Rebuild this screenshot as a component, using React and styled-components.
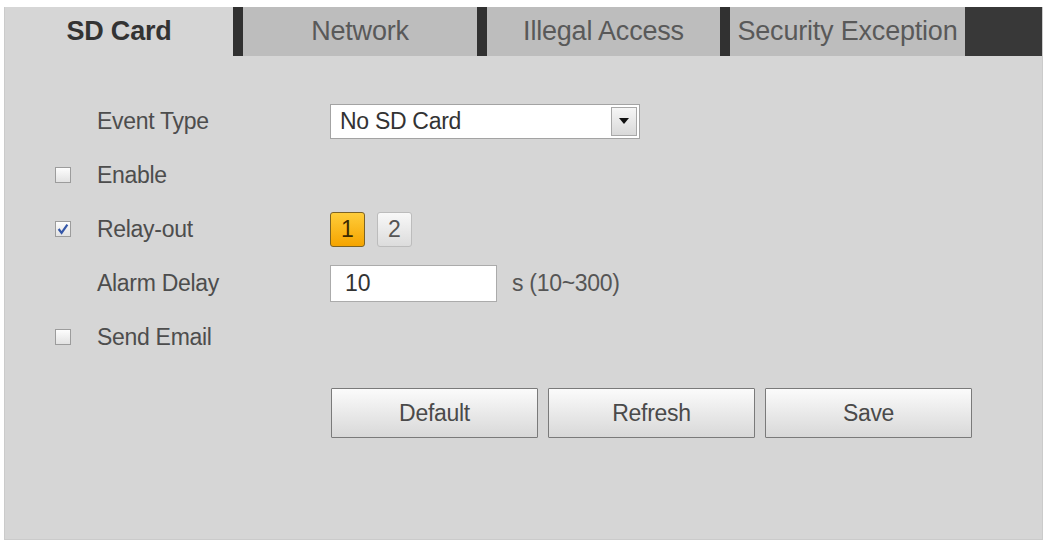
import React, { useState } from 'react';
import styled, { createGlobalStyle } from 'styled-components';

const GlobalStyle = createGlobalStyle`
  html, body {
    margin: 0;
    padding: 0;
    background: #fff;
    font-family: "Liberation Sans", Arial, sans-serif;
  }
`;

const Panel = styled.div`
  margin: 7px 0 0 4px;
  width: 1039px;
  height: 533px;
  box-sizing: border-box;
  background: #d6d6d6;
  border: 1px solid #cbcbcb;
  border-top: none;
  display: flex;
  flex-direction: column;
`;

const TabBar = styled.div`
  display: flex;
  height: 49px;
`;

const Tab = styled.div`
  width: ${(p) => p.$width}px;
  display: flex;
  align-items: center;
  justify-content: center;
  font-size: 27px;
  background: ${(p) => (p.$active ? '#d6d6d6' : '#bdbdbd')};
  color: ${(p) => (p.$active ? '#333' : '#595959')};
  font-weight: ${(p) => (p.$active ? 'bold' : 'normal')};
  letter-spacing: -0.2px;
`;

const TabGap = styled.div`
  width: 10px;
  background: #313131;
`;

const TabFill = styled.div`
  flex: 1;
  background: #383838;
`;

const Form = styled.div`
  padding: 38px 0 0 50px;
  display: flex;
  flex-direction: column;
`;

const Row = styled.div`
  display: flex;
  align-items: center;
  height: 54px;
`;

const CheckCell = styled.div`
  width: 42px;
  display: flex;
  align-items: center;
`;

const Label = styled.div`
  width: 233px;
  font-size: 23px;
  color: #4d4d4d;
  letter-spacing: -0.3px;
`;

const Box = styled.span`
  width: 16px;
  height: 16px;
  box-sizing: border-box;
  border: 1px solid #9c9c9c;
  background: linear-gradient(#fdfdfd, #e2e2e2);
  display: flex;
  align-items: center;
  justify-content: center;
`;

const Select = styled.div`
  width: 310px;
  height: 35px;
  box-sizing: border-box;
  background: #fff;
  border: 1px solid #a3a3a3;
  display: flex;
  align-items: center;
  justify-content: space-between;
  font-size: 23px;
  letter-spacing: -0.3px;
  color: #333;
  padding: 0 2px 0 9px;
`;

const Arrow = styled.span`
  width: 26px;
  height: 29px;
  box-sizing: border-box;
  border: 1px solid #a8a8a8;
  background: linear-gradient(#f6f6f6, #d9d9d9);
  display: flex;
  align-items: center;
  justify-content: center;
  &::after {
    content: '';
    border-left: 5px solid transparent;
    border-right: 5px solid transparent;
    border-top: 6px solid #111;
  }
`;

const RelayGroup = styled.div`
  display: flex;
  gap: 12px;
`;

const RelayButton = styled.button`
  width: 35px;
  height: 35px;
  border-radius: 3px;
  font-family: inherit;
  font-size: 23px;
  padding: 0;
  color: ${(p) => (p.$on ? '#3a2a00' : '#555')};
  border: 1px solid ${(p) => (p.$on ? '#7d6324' : '#bcbcbc')};
  background: ${(p) =>
    p.$on ? 'linear-gradient(#ffcd3a, #f5a400)' : 'linear-gradient(#f8f8f8, #dcdcdc)'};
`;

const Input = styled.div`
  width: 167px;
  height: 37px;
  box-sizing: border-box;
  background: #fff;
  border: 1px solid #ababab;
  display: flex;
  align-items: center;
  padding-left: 14px;
  font-size: 23px;
  color: #333;
`;

const Hint = styled.span`
  margin-left: 15px;
  font-size: 23px;
  letter-spacing: -0.3px;
  color: #555;
`;

const Actions = styled.div`
  display: flex;
  gap: 10px;
  margin: 24px 0 0 276px;
`;

const ActionButton = styled.button`
  width: 207px;
  height: 50px;
  font-family: inherit;
  font-size: 23px;
  letter-spacing: -0.3px;
  color: #4a4a4a;
  border: 1px solid #7a7a7a;
  border-radius: 1px;
  background: linear-gradient(#fbfbfb, #e6e6e6 60%, #d8d8d8);
`;

function Checkbox({ checked }) {
  return (
    <Box>
      {checked && (
        <svg width="12" height="12" viewBox="0 0 11 11">
          <path d="M1.5 5.5 L4.2 9 L9.5 1.5" fill="none" stroke="#3557a8" strokeWidth="2" />
        </svg>
      )}
    </Box>
  );
}

const tabs = [
  { label: 'SD Card', width: 228 },
  { label: 'Network', width: 234 },
  { label: 'Illegal Access', width: 233 },
  { label: 'Security Exception', width: 235 },
];

export default function App() {
  const [relay, setRelay] = useState(1);

  return (
    <>
      <GlobalStyle />
      <Panel>
        <TabBar>
          {tabs.map((tab, i) => (
            <React.Fragment key={tab.label}>
              {i > 0 && <TabGap />}
              <Tab $width={tab.width} $active={i === 0}>{tab.label}</Tab>
            </React.Fragment>
          ))}
          <TabFill />
        </TabBar>

        <Form>
          <Row>
            <CheckCell />
            <Label>Event Type</Label>
            <Select>
              No SD Card
              <Arrow />
            </Select>
          </Row>
          <Row>
            <CheckCell><Checkbox /></CheckCell>
            <Label>Enable</Label>
          </Row>
          <Row>
            <CheckCell><Checkbox checked /></CheckCell>
            <Label>Relay-out</Label>
            <RelayGroup>
              {[1, 2].map((n) => (
                <RelayButton key={n} $on={relay === n} onClick={() => setRelay(n)}>{n}</RelayButton>
              ))}
            </RelayGroup>
          </Row>
          <Row>
            <CheckCell />
            <Label>Alarm Delay</Label>
            <Input>10</Input>
            <Hint>s (10~300)</Hint>
          </Row>
          <Row>
            <CheckCell><Checkbox /></CheckCell>
            <Label>Send Email</Label>
          </Row>
          <Actions>
            <ActionButton>Default</ActionButton>
            <ActionButton>Refresh</ActionButton>
            <ActionButton>Save</ActionButton>
          </Actions>
        </Form>
      </Panel>
    </>
  );
}
